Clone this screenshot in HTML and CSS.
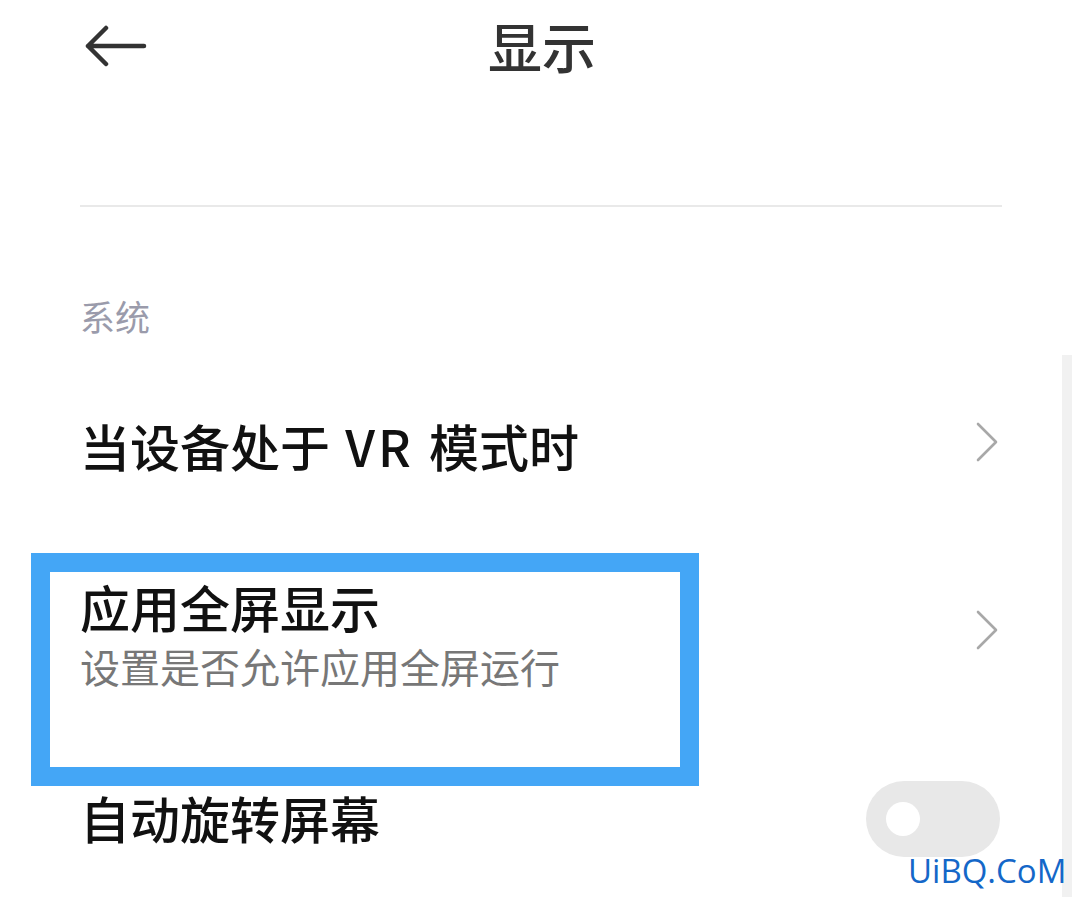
FILE: index.html
```html
<!doctype html>
<html lang="zh-CN">
<head>
    <meta charset="UTF-8">
    <title>显示</title>
    <link rel="stylesheet" href="styles.css">
</head>
<body>
<div class="page">
    <div class="header">
        <a class="back" href="javascript:void(0);">
            <svg width="64" height="42" viewBox="0 0 64 42">
                <path d="M4 21H60M22 3L4 21L22 39" fill="none" stroke="#333" stroke-width="4.5"
                      stroke-linecap="round" stroke-linejoin="round"/>
            </svg>
        </a>
        <div class="title">显示</div>
        <div></div>
    </div>

    <div class="divider"></div>

    <div class="group-title">系统</div>

    <div class="row row-vr">
        <div class="row-text">
            <div class="row-name">当设备处于 <span class="latin">VR</span> 模式时</div>
        </div>
        <svg class="chevron" width="24" height="40" viewBox="0 0 24 40">
            <path d="M3 2L21 20L3 38" fill="none" stroke="#a8a8a8" stroke-width="2.6"
                  stroke-linecap="round" stroke-linejoin="round"/>
        </svg>
    </div>

    <div class="row row-full">
        <div class="row-text">
            <div class="row-name">应用全屏显示</div>
            <div class="row-desc">设置是否允许应用全屏运行</div>
        </div>
        <svg class="chevron" width="24" height="40" viewBox="0 0 24 40">
            <path d="M3 2L21 20L3 38" fill="none" stroke="#a8a8a8" stroke-width="2.6"
                  stroke-linecap="round" stroke-linejoin="round"/>
        </svg>
    </div>

    <div class="row row-rotate">
        <div class="row-text">
            <div class="row-name">自动旋转屏幕</div>
        </div>
        <div class="switch"><span class="knob"></span></div>
    </div>

    <!--标注框-->
    <div class="highlight"></div>
    <div class="scrollbar"></div>
    <div class="watermark">UiBQ.CoM</div>
</div>
</body>
</html>
```

FILE: styles.css
```css
* {
    margin: 0;
    padding: 0;
}

body {
    background-color: #fff;
    font-family: "Noto Sans CJK SC", "Noto Sans", sans-serif;
    overflow: hidden;
}

.page {
    position: relative;
    width: 1080px;
    height: 897px;
    overflow: hidden;
}

.header {
    height: 92px;
    padding: 0 80px 0 84px;
    display: grid;
    grid-template-columns: 1fr auto 1fr;
    align-items: center;
}

.back {
    display: flex;
    align-items: center;
}

.title {
    font-size: 54px;
    line-height: 54px;
    font-weight: 500;
    color: #333;
}

.divider {
    height: 2px;
    margin: 113px 78px 0 80px;
    background-color: #e9e9e9;
}

.group-title {
    margin: 92px 0 0 80px;
    font-size: 35px;
    line-height: 34px;
    color: #9a9bab;
}

.row {
    display: flex;
    align-items: center;
    justify-content: space-between;
    padding: 0 80px 0 80px;
}

.row-vr {
    margin-top: 48px;
    height: 128px;
}

.row-full {
    height: 250px;
}

.row-rotate {
    height: 116px;
}

.row-name {
    font-size: 50px;
    line-height: 48px;
    font-weight: 500;
    color: #111;
}

.row-name .latin {
    margin: 0 4px;
    letter-spacing: 3px;
}

.row-desc {
    margin-top: 16px;
    font-size: 40px;
    line-height: 40px;
    color: #777;
}

.chevron {
    margin-right: 1px;
}

.row-vr .chevron {
    margin-top: -6px;
}

.row-full .chevron {
    margin-top: -8px;
}

.switch {
    width: 134px;
    height: 76px;
    border-radius: 38px;
    background-color: #e8e8e8;
    display: flex;
    align-items: center;
    padding-left: 20px;
    box-sizing: border-box;
    margin-top: 4px;
}

.knob {
    width: 34px;
    height: 34px;
    border-radius: 50%;
    background-color: #fff;
}

.highlight {
    position: absolute;
    left: 31px;
    top: 553px;
    width: 630px;
    height: 195px;
    border: 19px solid #44a6f6;
}

.scrollbar {
    position: absolute;
    left: 1062px;
    top: 355px;
    width: 10px;
    height: 542px;
    background-color: #f1f1f1;
}

.watermark {
    position: absolute;
    left: 908px;
    top: 850px;
    font-family: "Open Sans", sans-serif;
    font-size: 33px;
    line-height: 42px;
    color: #1467c8;
}
```
